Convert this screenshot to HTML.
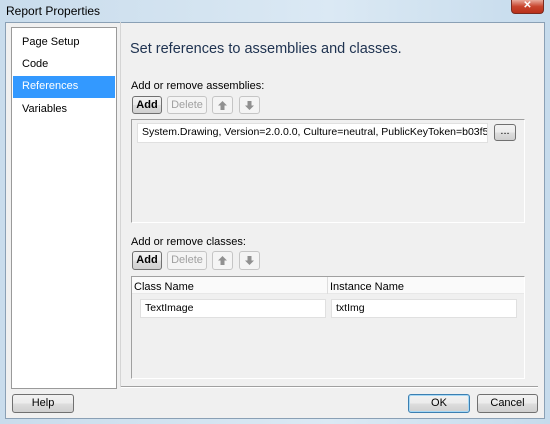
<!DOCTYPE html>
<html><head><style>
*{box-sizing:border-box;margin:0;padding:0}
body{width:550px;height:424px;overflow:hidden;font-family:"Liberation Sans",sans-serif;font-size:11px;color:#000;background:linear-gradient(90deg,#c9dcec,#dbe9f4 60%,#c6dbec);position:relative}
.a{position:absolute}
.btn{position:absolute;border:1px solid #707070;border-radius:3px;background:linear-gradient(#f2f2f2 0%,#ebebeb 50%,#dddddd 51%,#cfcfcf 100%);text-align:center;font-size:11px;line-height:16px}
.dis{border-color:#c5c5c5;background:#f4f4f4;color:#a0a0a0}
.tb{position:absolute;background:#fff;border:1px solid #e0e0e0;padding-left:4px;line-height:17px;font-size:10.5px;white-space:nowrap;overflow:hidden}
.ic{position:absolute;left:5px;top:4px}
</style></head><body>
<div class="a" style="left:6px;top:4px;font-size:12px;color:#000">Report Properties</div>
<div class="a" style="left:511px;top:0;width:33px;height:14px;border:1px solid #7a2b20;border-top:none;border-radius:0 0 4px 4px;background:linear-gradient(#e9a99b,#c8442d 50%,#b8301a);color:#fff;text-align:center;font-size:10px;line-height:12px;font-weight:bold">✕</div>
<div class="a" style="left:5px;top:22px;width:540px;height:397px;background:#f0f0f0;border:1px solid #8aa0b5"></div>
<div class="a" style="left:11px;top:27px;width:106px;height:362px;background:#fff;border:1px solid #9a9a9a"></div>
<div class="a" style="left:22px;top:36px">Page Setup</div>
<div class="a" style="left:22px;top:58px">Code</div>
<div class="a" style="left:13px;top:76px;width:102px;height:22px;background:#3399ff"></div>
<div class="a" style="left:22px;top:80px;color:#fff">References</div>
<div class="a" style="left:22px;top:103px">Variables</div>
<div class="a" style="left:120px;top:22px;width:1px;height:365px;background:#d5d5d5"></div>
<div class="a" style="left:121px;top:386px;width:417px;height:2px;border-top:1px solid #a0a0a0;border-bottom:1px solid #fff"></div>
<div class="a" style="left:130px;top:41px;font-size:14.5px;color:#1e3250">Set references to assemblies and classes.</div>
<div class="a" style="left:131px;top:80px">Add or remove assemblies:</div>
<div class="btn" style="left:132px;top:96px;width:30px;height:18px;font-weight:bold">Add</div>
<div class="btn dis" style="left:167px;top:96px;width:40px;height:18px">Delete</div>
<div class="btn dis" style="left:212px;top:96px;width:21px;height:18px"><svg class="ic" width="9" height="9"><path d="M4.5 0L9 4.5H6.5V9H2.5V4.5H0Z" fill="#909090"/></svg></div>
<div class="btn dis" style="left:239px;top:96px;width:21px;height:18px"><svg class="ic" width="9" height="9"><path d="M4.5 9L9 4.5H6.5V0H2.5V4.5H0Z" fill="#909090"/></svg></div>
<div class="a" style="left:131px;top:119px;width:394px;height:104px;border:1px solid #a0a0a0;border-right-color:#fff;border-bottom-color:#fff"></div>
<div class="tb" style="left:137px;top:123px;width:351px;height:20px">System.Drawing, Version=2.0.0.0, Culture=neutral, PublicKeyToken=b03f5f7f11d50a3a</div>
<div class="btn" style="left:494px;top:124px;width:22px;height:17px;line-height:12px">...</div>
<div class="a" style="left:131px;top:236px">Add or remove classes:</div>
<div class="btn" style="left:132px;top:251px;width:30px;height:19px;font-weight:bold;line-height:17px">Add</div>
<div class="btn dis" style="left:167px;top:251px;width:40px;height:19px;line-height:17px">Delete</div>
<div class="btn dis" style="left:212px;top:251px;width:21px;height:19px"><svg class="ic" width="9" height="9"><path d="M4.5 0L9 4.5H6.5V9H2.5V4.5H0Z" fill="#909090"/></svg></div>
<div class="btn dis" style="left:239px;top:251px;width:21px;height:19px"><svg class="ic" width="9" height="9"><path d="M4.5 9L9 4.5H6.5V0H2.5V4.5H0Z" fill="#909090"/></svg></div>
<div class="a" style="left:131px;top:276px;width:394px;height:103px;border:1px solid #a0a0a0;border-right-color:#fff;border-bottom-color:#fff"></div>
<div class="a" style="left:132px;top:277px;width:392px;height:17px;background:#fafafa;border-bottom:1px solid #e8e8e8"></div>
<div class="a" style="left:327px;top:277px;width:1px;height:17px;background:#ddd"></div>
<div class="a" style="left:134px;top:281px">Class Name</div>
<div class="a" style="left:330px;top:281px">Instance Name</div>
<div class="tb" style="left:140px;top:299px;width:186px;height:19px">TextImage</div>
<div class="tb" style="left:331px;top:299px;width:186px;height:19px">txtImg</div>
<div class="btn" style="left:12px;top:394px;width:62px;height:19px;line-height:17px">Help</div>
<div class="btn" style="left:408px;top:394px;width:62px;height:19px;line-height:17px;border-color:#3c7fb1;box-shadow:inset 0 0 0 1px #a6d8f5">OK</div>
<div class="btn" style="left:477px;top:394px;width:61px;height:19px;line-height:17px">Cancel</div>
</body></html>
